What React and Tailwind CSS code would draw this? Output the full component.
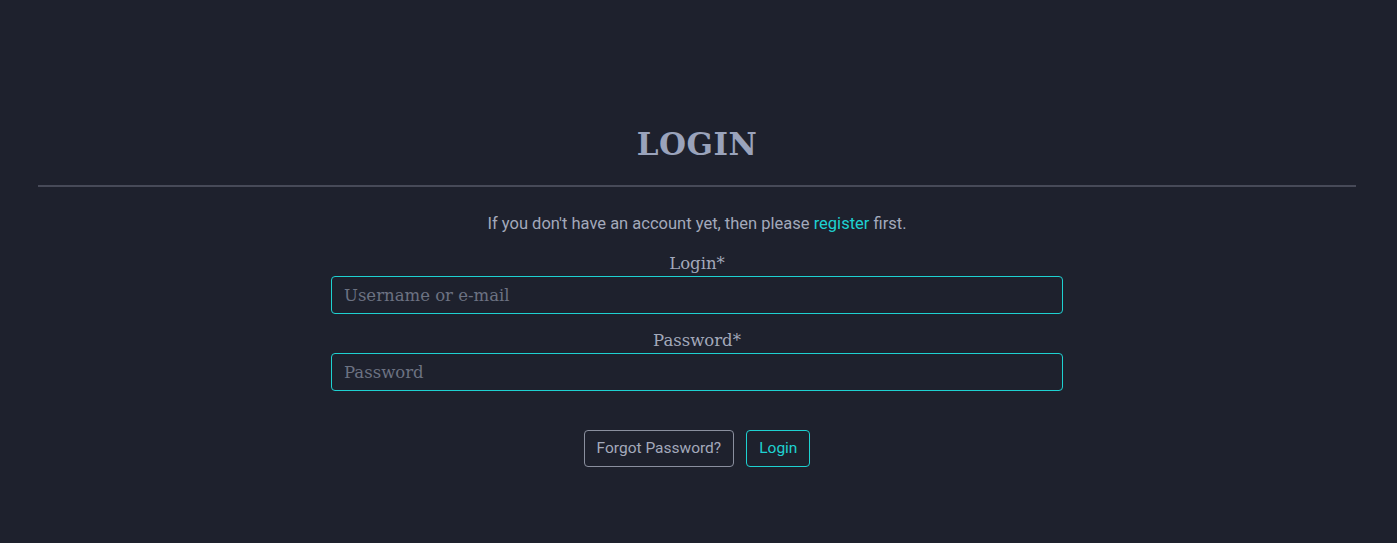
import React from "react";

const LoginPage = () => {
  return (
    <div className="min-h-[543px] w-full bg-[#1e212d] pt-[124px] font-['Roboto',sans-serif]">
      <div className="ml-[38px] w-[1318px]">
        <h1 className="text-center font-['DejaVu_Serif',serif] text-[31px] font-bold leading-[40px] tracking-[0.5px] text-[#9aa3bb]">
          LOGIN
        </h1>
        <hr className="mt-[21px] h-[2px] border-0 bg-[#474a58]" />
        <p className="mt-[25px] text-center text-[16.5px] leading-[24px] text-[#a3a9bb]">
          If you don't have an account yet, then please{" "}
          <a href="#" className="text-[#1ed1d1]">
            register
          </a>{" "}
          first.
        </p>
        <form className="mx-auto mt-[17px] w-[732px]">
          <label className="block text-center font-['DejaVu_Serif',serif] text-[16.5px] leading-[22px] text-[#a3a9bb]">
            Login*
          </label>
          <input
            type="text"
            placeholder="Username or e-mail"
            className="mt-[1px] block h-[38px] w-full rounded-[4px] border border-[#1ed1d1] bg-transparent px-[12px] font-['DejaVu_Serif',serif] text-[16.5px] text-[#a3a9bb] outline-none placeholder:text-[#6c7282]"
          />
          <label className="mt-[16px] block text-center font-['DejaVu_Serif',serif] text-[16.5px] leading-[22px] text-[#a3a9bb]">
            Password*
          </label>
          <input
            type="password"
            placeholder="Password"
            className="mt-[1px] block h-[38px] w-full rounded-[4px] border border-[#1ed1d1] bg-transparent px-[12px] font-['DejaVu_Serif',serif] text-[16.5px] text-[#a3a9bb] outline-none placeholder:text-[#6c7282]"
          />
          <div className="mt-[39px] flex justify-center gap-[12px]">
            <button
              type="button"
              className="h-[37px] rounded-[4px] border border-[#8a8f9e] px-[12px] text-[15.5px] text-[#a3a9bb]"
            >
              Forgot Password?
            </button>
            <button
              type="submit"
              className="h-[37px] rounded-[4px] border border-[#1ed1d1] px-[12px] text-[15.5px] text-[#1ed1d1]"
            >
              Login
            </button>
          </div>
        </form>
      </div>
    </div>
  );
};

export default function App() {
  return <LoginPage />;
}
